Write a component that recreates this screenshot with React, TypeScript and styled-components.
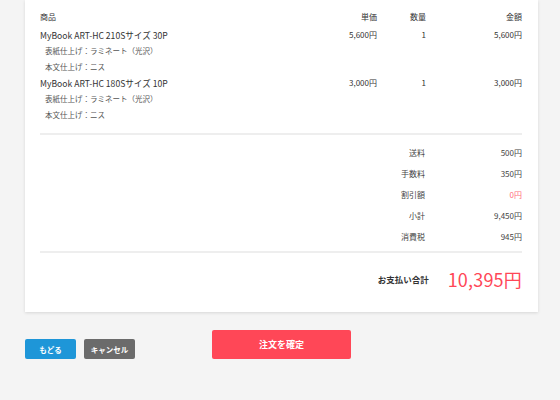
import styled, { createGlobalStyle } from 'styled-components'

const GlobalStyle = createGlobalStyle`
  html, body {
    margin: 0;
    padding: 0;
    background: #f4f4f4;
    font-family: 'Noto Sans CJK JP', 'Noto Sans', sans-serif;
    color: #333;
  }
`

const Page = styled.div`
  width: 560px;
  height: 400px;
  padding: 0 22px 0 25px;
  box-sizing: border-box;
  overflow: hidden;
`

const Card = styled.div`
  background: #fff;
  box-shadow: 0 1px 3px rgba(0, 0, 0, 0.12);
  padding: 10px 16px 0 15px;
`

const Row = styled.div<{ $head?: boolean }>`
  display: grid;
  grid-template-columns: 1fr 80px 49px 96px;
  font-size: 8px;
  line-height: ${(p) => (p.$head ? '14px' : '16px')};
  margin-bottom: ${(p) => (p.$head ? '3px' : '0')};
  color: #333;
`

const Cell = styled.div<{ $right?: boolean }>`
  text-align: ${(p) => (p.$right ? 'right' : 'left')};
  white-space: nowrap;
`

const Name = styled(Cell)`
  font-size: 8.6px;
`

const Sub = styled.div`
  font-size: 7.5px;
  line-height: 16px;
  padding-left: 5px;
  color: #555;
`

const Divider = styled.div`
  height: 2px;
  background: #eeeeee;
`

const Items = styled.div`
  padding-bottom: 10px;
`

const Summary = styled.div`
  padding: 7px 0 4px;
`

const SumRow = styled.div`
  display: grid;
  grid-template-columns: 1fr 97px;
  font-size: 8px;
  line-height: 21px;
  text-align: right;
  color: #444;
`

const SumValue = styled.div<{ $accent?: boolean }>`
  color: ${(p) => (p.$accent ? '#ff6b7a' : '#444')};
`

const Total = styled.div`
  display: flex;
  justify-content: flex-end;
  align-items: center;
  gap: 19px;
  padding: 15px 0 22px;
`

const TotalLabel = styled.div`
  font-size: 8.5px;
  font-weight: 700;
  color: #333;
`

const TotalValue = styled.div`
  font-size: 18px;
  line-height: 22px;
  color: #ff4757;
  letter-spacing: 0.2px;
`

const Actions = styled.div`
  display: flex;
  align-items: flex-end;
  margin-top: 18px;
`

const Button = styled.button<{ $color: string; $w: number; $h: number }>`
  width: ${(p) => p.$w}px;
  height: ${(p) => p.$h}px;
  background: ${(p) => p.$color};
  color: #fff;
  border: none;
  border-radius: 2px;
  font-family: inherit;
  font-size: 7.5px;
  font-weight: 700;
  padding: 0;
  margin-right: 8px;
  cursor: pointer;
`

const Confirm = styled(Button)`
  font-size: 9px;
  margin-left: 69px;
`

const items = [
  { name: 'MyBook ART-HC 210Sサイズ 30P', price: '5,600円', qty: 1, amount: '5,600円' },
  { name: 'MyBook ART-HC 180Sサイズ 10P', price: '3,000円', qty: 1, amount: '3,000円' },
]

const summary = [
  { label: '送料', value: '500円' },
  { label: '手数料', value: '350円' },
  { label: '割引額', value: '0円', accent: true },
  { label: '小計', value: '9,450円' },
  { label: '消費税', value: '945円' },
]

export default function App() {
  return (
    <Page>
      <GlobalStyle />
      <Card>
        <Items>
          <Row $head>
            <Cell>商品</Cell>
            <Cell $right>単価</Cell>
            <Cell $right>数量</Cell>
            <Cell $right>金額</Cell>
          </Row>
          {items.map((it) => (
            <div key={it.name}>
              <Row>
                <Name>{it.name}</Name>
                <Cell $right>{it.price}</Cell>
                <Cell $right>{it.qty}</Cell>
                <Cell $right>{it.amount}</Cell>
              </Row>
              <Sub>表紙仕上げ：ラミネート（光沢）</Sub>
              <Sub>本文仕上げ：ニス</Sub>
            </div>
          ))}
        </Items>
        <Divider />
        <Summary>
          {summary.map((s) => (
            <SumRow key={s.label}>
              <div>{s.label}</div>
              <SumValue $accent={s.accent}>{s.value}</SumValue>
            </SumRow>
          ))}
        </Summary>
        <Divider />
        <Total>
          <TotalLabel>お支払い合計</TotalLabel>
          <TotalValue>10,395円</TotalValue>
        </Total>
      </Card>
      <Actions>
        <Button $color="#1e96d8" $w={51} $h={20}>もどる</Button>
        <Button $color="#6b6b6b" $w={51} $h={20}>キャンセル</Button>
        <Confirm $color="#ff4757" $w={139} $h={29}>注文を確定</Confirm>
      </Actions>
    </Page>
  )
}
